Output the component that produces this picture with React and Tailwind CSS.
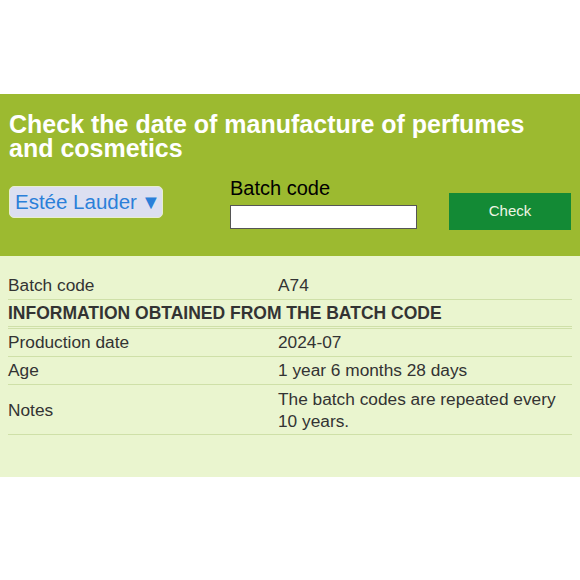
export default function App() {
  const rows = [
    { label: 'Production date', value: '2024-07' },
    { label: 'Age', value: '1 year 6 months 28 days' },
  ]

  return (
    <div className="w-[580px] h-[580px] bg-white font-['Liberation_Sans',Arial,sans-serif]">
      <div className="h-[94px]" />
      <div className="bg-[#9cba30] h-[162px] px-[9px] pt-[18px]">
        <h1 className="text-white font-bold text-[25px] leading-[24px]">
          Check the date of manufacture of perfumes and cosmetics
        </h1>
        <div className="flex mt-[18px]">
          <div className="w-[221px] pt-[8px]">
            <div className="inline-flex items-center h-[32px] w-[154px] pl-[5px] rounded-[5px] bg-[#dcdff1] border-[1.5px] border-[#e8eed0] text-[#2b7fd9] text-[20.5px]">
              Estée Lauder <span className="ml-[4px] text-[20px] leading-none">▼</span>
            </div>
          </div>
          <div className="flex flex-col w-[219px]">
            <label className="text-black text-[20px] leading-[20px] h-[27px]">Batch code</label>
            <input className="w-[187px] h-[24px] bg-white border border-[#555] outline-none" />
          </div>
          <button className="mt-[15px] w-[122px] h-[37px] bg-[#138a35] text-[#eef5e4] text-[15px]">Check</button>
        </div>
      </div>
      <div className="bg-[#eaf5cf] h-[221px] px-[8px] pt-[16px] text-[#333] text-[17.3px]">
        <div className="flex items-center h-[28px] border-b border-[#cfe0a8]">
          <div className="w-[270px]">Batch code</div>
          <div>A74</div>
        </div>
        <div className="flex items-center h-[29px] border-b-[3px] border-double border-[#cfe0a8] font-bold text-[17.5px]">
          INFORMATION OBTAINED FROM THE BATCH CODE
        </div>
        {rows.map(r => (
          <div key={r.label} className="flex items-center h-[28px] border-b border-[#cfe0a8]">
            <div className="w-[270px]">{r.label}</div>
            <div>{r.value}</div>
          </div>
        ))}
        <div className="flex items-center h-[50px] border-b border-[#cfe0a8] leading-[22px]">
          <div className="w-[270px]">Notes</div>
          <div className="w-[294px]">The batch codes are repeated every 10 years.</div>
        </div>
      </div>
    </div>
  )
}
